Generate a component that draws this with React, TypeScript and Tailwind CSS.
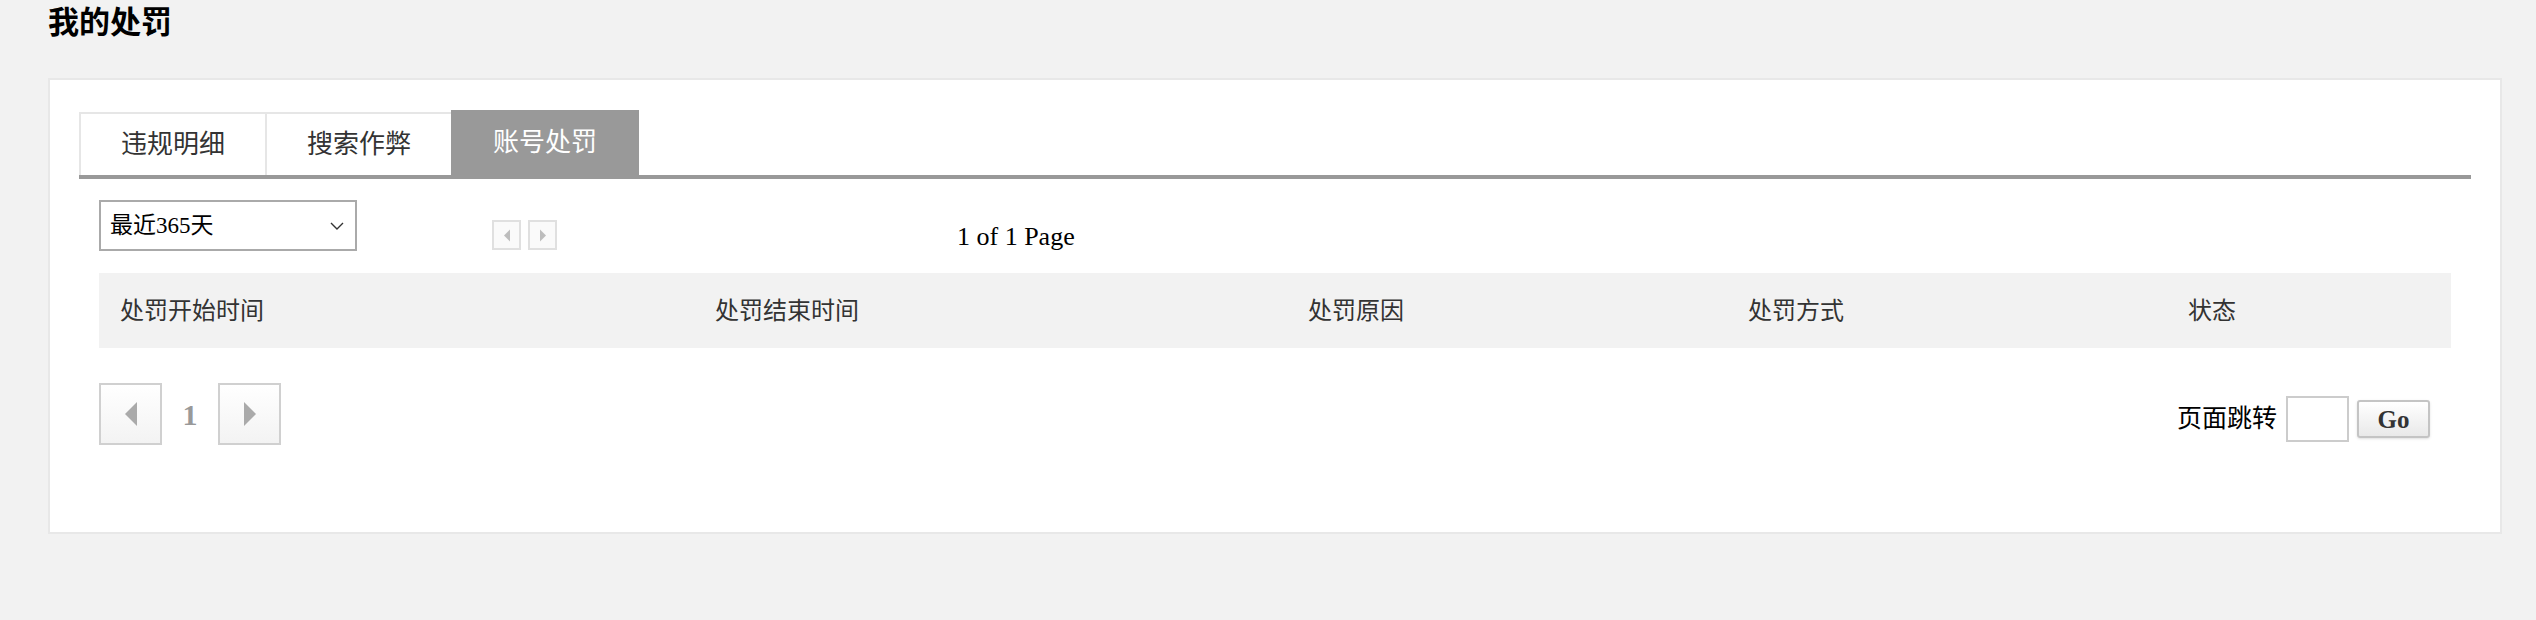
import { useState } from "react";

const serif = { fontFamily: '"Liberation Serif", "Noto Sans CJK SC", serif' };

const tabs = ["违规明细", "搜索作弊", "账号处罚"];

const columns = [
  { label: "处罚开始时间", width: "w-[595px]" },
  { label: "处罚结束时间", width: "w-[593px]" },
  { label: "处罚原因", width: "w-[440px]" },
  { label: "处罚方式", width: "w-[440px]" },
  { label: "状态", width: "flex-1" },
];

function SmallArrow({ dir }: { dir: "left" | "right" }) {
  return (
    <button className="flex h-[30px] w-[29px] items-center justify-center border-2 border-[#e0e0e0] bg-[#fafafa]">
      <svg viewBox="0 0 8 12" className="h-[13px] w-[8px]" fill="#bdbdbd">
        {dir === "left" ? <path d="M7 0v12L1 6z" /> : <path d="M1 0v12l6-6z" />}
      </svg>
    </button>
  );
}

function PageArrow({ dir }: { dir: "left" | "right" }) {
  return (
    <button className="flex h-[62px] w-[63px] items-center justify-center border-2 border-[#d0d0d0] bg-gradient-to-b from-white to-[#f3f3f3]">
      <svg viewBox="0 0 14 24" className="h-[24px] w-[14px]" fill="#aaaaaa">
        {dir === "left" ? <path d="M13 0v24L1 12z" /> : <path d="M1 0v24l12-12z" />}
      </svg>
    </button>
  );
}

export default function App() {
  const [active, setActive] = useState(2);
  const [jump, setJump] = useState("");

  return (
    <div className="h-[620px] w-full bg-[#f2f2f2] pl-[48px] pr-[34px] pt-[3px] text-[#222]" style={serif}>
      {/* Title */}
      <h1 className="text-[31px] font-bold leading-[40px] text-black">我的处罚</h1>

      {/* Card */}
      <div className="mt-[35px] h-[456px] border-2 border-[#e8e8e8] bg-white px-[29px] pt-[30px]">
        {/* Tabs */}
        <div className="flex h-[69px] items-end border-b-4 border-[#999999]">
          {tabs.map((t, i) =>
            i === active ? (
              <button
                key={t}
                onClick={() => setActive(i)}
                className="flex h-[65px] w-[188px] items-center justify-center bg-[#999999] text-[26px] text-white"
              >
                {t}
              </button>
            ) : (
              <button
                key={t}
                onClick={() => setActive(i)}
                className="flex h-[63px] w-[186px] items-center justify-center border-t-2 border-l-2 border-[#e6e6e6] text-[26px] text-[#333]"
              >
                {t}
              </button>
            )
          )}
        </div>

        <div className="px-[20px]">
          {/* Filter row */}
          <div className="mt-[21px] flex h-[51px] items-start">
            <div className="flex h-[51px] w-[258px] items-center justify-between border-2 border-[#aaaaaa] pl-[9px] pr-[11px] text-[23px] text-black">
              <span className="pt-[2px]">最近365天</span>
              <svg viewBox="0 0 14 8" className="h-[8px] w-[14px]" fill="none" stroke="#333" strokeWidth="1.4">
                <polyline points="1,1 7,7 13,1" />
              </svg>
            </div>
            <div className="ml-[135px] mt-[20px] flex gap-[7px]">
              <SmallArrow dir="left" />
              <SmallArrow dir="right" />
            </div>
            <div className="ml-[400px] mt-[20px] text-[26px] leading-[34px] text-black">1 of 1 Page</div>
          </div>

          {/* Table header */}
          <div className="mt-[22px] flex h-[75px] items-center bg-[#f2f2f2] pl-[21px] text-[24px] text-[#333]">
            {columns.map((c) => (
              <div key={c.label} className={c.width}>
                {c.label}
              </div>
            ))}
          </div>

          {/* Pagination */}
          <div className="mt-[35px] flex items-center justify-between pr-[21px]">
            <div className="flex items-center">
              <PageArrow dir="left" />
              <span className="w-[56px] text-center text-[30px] font-bold text-[#999]">1</span>
              <PageArrow dir="right" />
            </div>
            <div className="flex items-center pt-[10px]">
              <span className="text-[25px] text-black">页面跳转</span>
              <input
                value={jump}
                onChange={(e) => setJump(e.target.value)}
                className="ml-[9px] h-[46px] w-[63px] border-2 border-[#cccccc] outline-none"
              />
              <button className="ml-[8px] h-[38px] w-[73px] rounded-[3px] border-2 border-[#c4c4c4] bg-gradient-to-b from-white to-[#e9e9e9] text-[25px] font-bold leading-none text-[#333] shadow-sm">
                Go
              </button>
            </div>
          </div>
        </div>
      </div>
    </div>
  );
}
